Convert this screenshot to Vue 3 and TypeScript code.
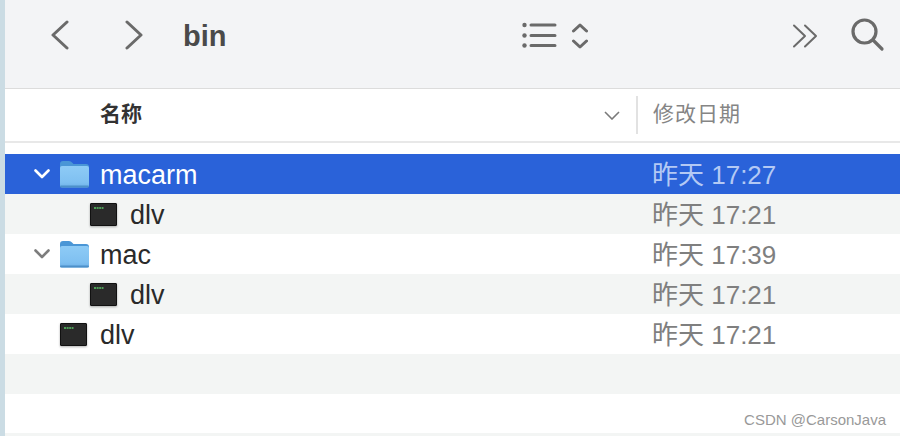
<script setup lang="ts">
interface Row {
  name: string
  date: string
  kind: 'folder' | 'exec'
  depth: number
  open?: boolean
  selected?: boolean
}
const rows: Row[] = [
  { name: 'macarm', date: '昨天 17:27', kind: 'folder', depth: 0, open: true, selected: true },
  { name: 'dlv', date: '昨天 17:21', kind: 'exec', depth: 1 },
  { name: 'mac', date: '昨天 17:39', kind: 'folder', depth: 0, open: true },
  { name: 'dlv', date: '昨天 17:21', kind: 'exec', depth: 1 },
  { name: 'dlv', date: '昨天 17:21', kind: 'exec', depth: 0 },
]
</script>

<template>
  <div class="window">
    <header class="toolbar">
      <svg class="nav back" width="20" height="30" viewBox="0 0 20 30"><path d="M18 2 L4 15 L18 28" /></svg>
      <svg class="nav forward" width="20" height="30" viewBox="0 0 20 30"><path d="M3 2 L17 15 L3 28" /></svg>
      <span class="title">bin</span>
      <svg class="view" width="66" height="30" viewBox="0 0 66 30">
        <circle cx="2.5" cy="5" r="2.2" /><circle cx="2.5" cy="15.5" r="2.2" /><circle cx="2.5" cy="25.5" r="2.2" />
        <path d="M9 5 H33 M9 15.5 H33 M9 25.5 H33" />
        <path class="updown" d="M51.5 11 L58 5 L64.5 11 M51.5 21 L58 27 L64.5 21" />
      </svg>
      <svg class="more" width="26" height="24" viewBox="0 0 26 24"><path d="M2 1.5 L13 12 L2 22.5 M13 1.5 L24 12 L13 22.5" /></svg>
      <svg class="search" width="34" height="34" viewBox="0 0 34 34"><circle cx="13.5" cy="13.5" r="11.5" /><path d="M22 22 L31 31" /></svg>
    </header>
    <div class="columns">
      <span class="col-name">名称</span>
      <svg class="sort" width="16" height="9" viewBox="0 0 16 9"><path d="M1 1 L8 8 L15 1" /></svg>
      <span class="divider"></span>
      <span class="col-date">修改日期</span>
    </div>
    <div class="list">
      <div
        v-for="(row, i) in rows"
        :key="i"
        class="row"
        :class="{ selected: row.selected, depth1: row.depth === 1 }"
      >
        <div class="name-cell">
          <svg v-if="row.open" class="chevron" width="16" height="10" viewBox="0 0 16 10"><path d="M1.5 1.5 L8 8 L14.5 1.5" /></svg>
          <svg v-if="row.kind === 'folder'" class="icon folder" width="29" height="28" viewBox="0 0 29 28">
            <defs>
              <linearGradient :id="`folder-${i}`" x1="0" y1="0" x2="0" y2="1">
                <stop offset="0" stop-color="#8ecbf6" />
                <stop offset="0.75" stop-color="#7fc0f1" />
                <stop offset="1" stop-color="#6fb2e8" />
              </linearGradient>
            </defs>
            <path d="M0 4 Q0 1 3 1 H9 Q11 1 12 2.5 L13.5 4 H26 Q29 4 29 7 V10 H0 Z" fill="#4a96d6" />
            <rect x="0" y="6" width="29" height="21.5" rx="2" :fill="`url(#folder-${i})`" />
            <rect x="0" y="25.5" width="29" height="2" rx="1" fill="#4d90c9" />
          </svg>
          <svg v-else class="icon exec" width="27" height="23" viewBox="0 0 27 23">
            <rect x="0.5" y="0.5" width="26" height="22" rx="0.5" fill="#2a2a2a" stroke="#111" />
            <path d="M4 5 H13.5" stroke="#4f9e58" stroke-width="1.8" stroke-dasharray="2 0.6" />
          </svg>
          <span class="name">{{ row.name }}</span>
        </div>
        <span class="date">{{ row.date }}</span>
      </div>
      <div class="row empty"></div>
      <div class="row last"></div>
    </div>
    <div class="watermark">CSDN @CarsonJava</div>
  </div>
</template>

<style>
html, body { margin: 0; background: #fff; }
</style>

<style scoped>
.window {
  width: 895px;
  height: 436px;
  border-left: 5px solid #cbdce4;
  position: relative;
  overflow: hidden;
  font-family: "Liberation Sans", "Noto Sans CJK SC", sans-serif;
  background: #fff;
}
.toolbar {
  box-sizing: border-box;
  background: #f3f4f6;
  border-bottom: 1px solid #dcdcdc;
  display: flex;
  align-items: flex-start;
  padding-top: 20px;
  height: 89px;
}
.toolbar svg { fill: none; stroke: #6a6a6a; stroke-width: 3; stroke-linecap: round; stroke-linejoin: round; flex: none; }
.back { margin-left: 44px; }
.forward { margin-left: 55px; }
.title { margin-left: 39px; font-size: 29px; line-height: 32px; font-weight: 700; color: #4a4a4a; }
.view { margin-left: 295px; }
.view circle { fill: #6a6a6a; stroke: none; }
.more { margin-left: 204px; margin-top: 4px; stroke-width: 2 !important; }
.search { margin-left: 33px; margin-top: -2px; stroke-width: 3.2 !important; }
.columns {
  height: 54px;
  box-sizing: border-box;
  border-bottom: 2px solid #e8e8e8;
  display: flex;
  align-items: center;
  position: relative;
}
.col-name { margin-left: 95px; font-size: 21px; line-height: 24px; font-weight: 700; color: #333; width: 504px; margin-top: -2px; }
.sort { fill: none; stroke: #7a7a7a; stroke-width: 1.6; flex: none; }
.divider { width: 2px; height: 38px; background: #e2e2e2; margin-left: 16px; }
.col-date { margin-left: 15px; font-size: 21px; line-height: 24px; color: #858585; letter-spacing: 1px; margin-top: -2px; }
.list { margin-top: 11px; }
.row {
  height: 40px;
  display: flex;
  align-items: center;
  background: #fff;
  color: #2a2a2a;
}
.row:nth-child(even) { background: #f3f5f4; }
.row.selected { background: #2a62d9; color: #fff; }
.name-cell { width: 647px; display: flex; align-items: center; position: relative; padding-left: 55px; box-sizing: border-box; }
.row.depth1 .name-cell { padding-left: 85px; }
.chevron { position: absolute; left: 29px; top: 50%; margin-top: -5px; fill: none; stroke: #7d7d7d; stroke-width: 2.6; stroke-linecap: round; stroke-linejoin: round; }
.selected .chevron { stroke: #fff; }
.icon { flex: none; }
.folder { margin-right: 11px; }
.exec { margin-right: 13px; filter: drop-shadow(0 1px 1px rgba(0, 0, 0, 0.3)); }
.name { font-size: 27px; line-height: 30px; position: relative; top: 1px; }
.date { font-size: 26px; line-height: 30px; color: #7f7f7f; position: relative; top: 1px; }
.selected .date { color: #b4c9f4; }
.row.empty { background: #f3f5f4; }
.row.last { height: 39px; background: #fff; }
.watermark {
  position: absolute;
  right: 14px;
  bottom: 8px;
  font-size: 15px;
  color: #999;
}
.window::after {
  content: "";
  position: absolute;
  left: 0;
  right: 0;
  bottom: 0;
  height: 3px;
  background: #f3f5f4;
}
</style>
